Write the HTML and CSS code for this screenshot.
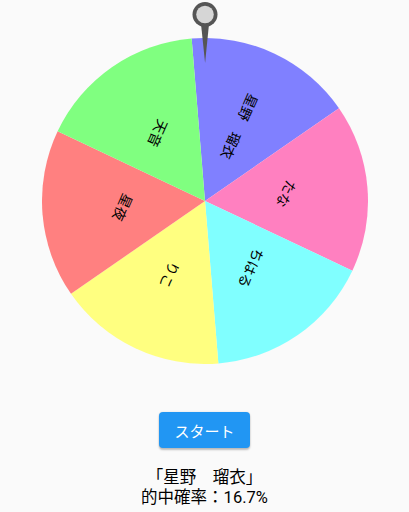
FILE: index.html
```html
<!DOCTYPE html>
<html lang="ja">
<head>
    <meta charset="UTF-8">
    <title>ルーレット</title>
    <link rel="stylesheet" href="styles.css">
</head>
<body>
<div class="roulette">
    <svg class="wheel" width="326" height="326" viewBox="-163 -163 326 326">
        <g class="segments">
            <path transform="rotate(-4.7)" fill="#8080ff" d="M0 0 L0 -163 A163 163 0 0 1 141.16 -81.5 Z"/>
            <path transform="rotate(55.3)" fill="#ff80c0" d="M0 0 L0 -163 A163 163 0 0 1 141.16 -81.5 Z"/>
            <path transform="rotate(115.3)" fill="#80ffff" d="M0 0 L0 -163 A163 163 0 0 1 141.16 -81.5 Z"/>
            <path transform="rotate(175.3)" fill="#ffff80" d="M0 0 L0 -163 A163 163 0 0 1 141.16 -81.5 Z"/>
            <path transform="rotate(235.3)" fill="#ff8080" d="M0 0 L0 -163 A163 163 0 0 1 141.16 -81.5 Z"/>
            <path transform="rotate(295.3)" fill="#80ff80" d="M0 0 L0 -163 A163 163 0 0 1 141.16 -81.5 Z"/>
        </g>
        <g class="labels">
            <text transform="rotate(25.3) translate(0 -82) rotate(88.7)">星野　瑠衣</text>
            <text transform="rotate(85.3) translate(0 -82) rotate(28.7)">たな</text>
            <text transform="rotate(145.3) translate(0 -82) rotate(-31.3)">ちはる</text>
            <text transform="rotate(205.3) translate(0 -82) rotate(-91.3)">りこ</text>
            <text transform="rotate(265.3) translate(0 -82) rotate(-151.3)">星夜</text>
            <text transform="rotate(325.3) translate(0 -82) rotate(-211.3)">天音</text>
        </g>
    </svg>
    <svg class="pointer" width="30" height="66" viewBox="0 0 30 66">
        <polygon points="10.8,22 19.2,22 15.1,63" fill="#555"/>
        <circle cx="15" cy="14.5" r="12.5" fill="#555"/>
        <circle cx="15" cy="14.5" r="8.8" fill="#d6d6d6"/>
    </svg>
</div>
<button class="start-btn">スタート</button>
<p class="result">「星野　瑠衣」<br>的中確率：16.7%</p>
</body>
</html>
```
FILE: styles.css
```css
body {
    margin: 0;
    background: #fafafa;
    font-family: Roboto, "Noto Sans CJK JP", sans-serif;
    display: flex;
    flex-direction: column;
    align-items: center;
}

.roulette {
    position: relative;
    padding-top: 38px;
    display: flex;
    justify-content: center;
    width: 100%;
}

.wheel {
    display: block;
}

.labels text {
    font-family: "Noto Sans CJK JP", sans-serif;
    font-size: 14px;
    fill: #000;
    text-anchor: middle;
    dominant-baseline: central;
}

.pointer {
    position: absolute;
    top: 0;
    left: 50%;
    margin-left: -15px;
}

.start-btn {
    margin-top: 48px;
    width: 91px;
    height: 36px;
    border: none;
    border-radius: 4px;
    background: #2196f3;
    color: #fff;
    font-family: Roboto, "Noto Sans CJK JP", sans-serif;
    font-size: 15px;
    box-shadow: 0 2px 2px rgba(0, 0, 0, 0.24), 0 0 2px rgba(0, 0, 0, 0.12);
    padding: 0;
}

.result {
    margin: 20px 0 0;
    font-size: 16.5px;
    line-height: 20px;
    text-align: center;
    color: #000;
}
```
